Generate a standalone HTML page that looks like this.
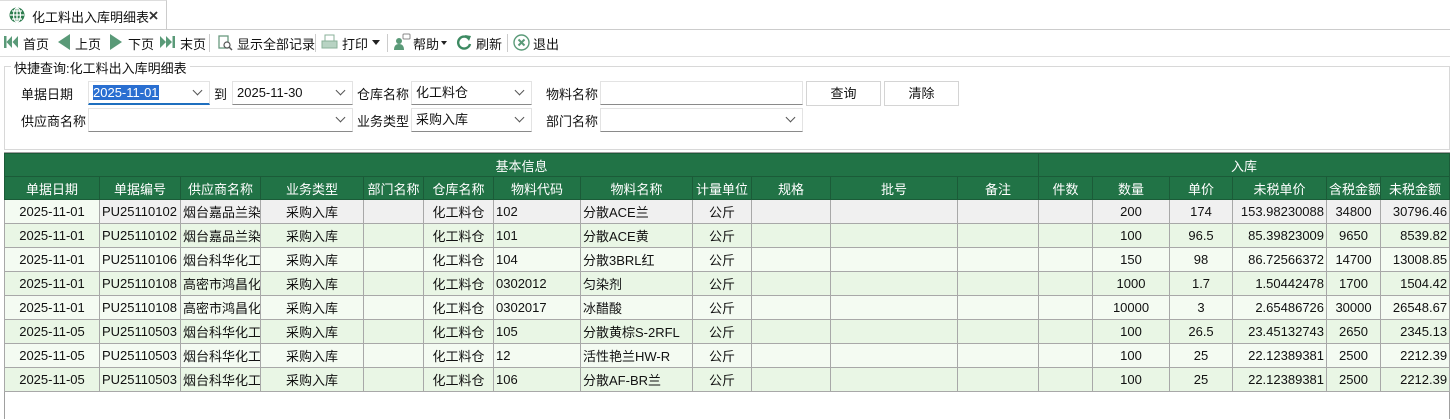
<!DOCTYPE html><html><head><meta charset="utf-8"><style>
*{box-sizing:border-box;margin:0;padding:0}
body{width:1450px;height:419px;overflow:hidden;background:#fff;font-family:"Liberation Sans","Noto Sans CJK SC",sans-serif;font-size:13px;color:#111;position:relative}
.a{position:absolute;white-space:nowrap}
.inp{position:absolute;height:24px;border:1px solid #e3e3e3;border-bottom:1px solid #8a8a8a;background:#fff;line-height:22px;padding-left:4px;font-size:13px}
.inp .v{position:absolute;right:8px;top:5px;width:7px;height:7px;border-right:1px solid #555;border-bottom:1px solid #555;transform:rotate(45deg)}
.btn{position:absolute;height:25px;border:1px solid #d4d4d4;background:#fff;text-align:center;line-height:23px}
table{position:absolute;left:4px;top:153px;width:1445px;border-collapse:collapse;table-layout:fixed;border:1px solid #a0a0a0}
td,th{border:1px solid #a8a8a8;height:24px;padding:0 2px;white-space:nowrap;overflow:hidden;font-weight:normal}
th{background:#217346;color:#fff;border-color:#1b5b38;text-align:center;height:23px}
tr.g td{background:#e9f6e5}
tr.l td{background:#f4fbf2}
tr.s td{background:#f0f0f0}
.c{text-align:center}.r{text-align:right}
.sep{position:absolute;top:34px;width:1px;height:18px;background:#ccc}
</style></head><body>
<div class="a" style="left:0;top:0;width:167px;height:30px;border-right:1px solid #ccc;border-top:1px solid #ddd"></div>
<div class="a" style="left:0;top:29px;width:1450px;height:1px;background:#ccc"></div>
<svg class="a" style="left:9px;top:7px" width="16" height="16" viewBox="0 0 16 16"><circle cx="8" cy="8" r="7.5" fill="#2e7d4f"/><path d="M1 8h14M8 1v14M3 4h10M3 12h10" stroke="#fff" stroke-width="1.3" fill="none"/><ellipse cx="8" cy="8" rx="3.5" ry="7" stroke="#fff" stroke-width="1.2" fill="none"/></svg>
<div class="a" style="left:32px;top:7px;font-size:13px">化工料出入库明细表</div>
<svg class="a" style="left:149px;top:11px" width="9" height="9"><path d="M1 1L8 8M8 1L1 8" stroke="#333" stroke-width="1.8"/></svg>
<!-- toolbar -->
<svg class="a" style="left:4px;top:35px" width="14" height="14"><rect x="0" y="1" width="2.5" height="12" fill="#5a9a78"/><path d="M8 1L2.5 7L8 13ZM14 1L8.5 7L14 13Z" fill="#5a9a78"/></svg>
<div class="a" style="left:23px;top:34px">首页</div>
<svg class="a" style="left:57px;top:34px" width="14" height="16"><path d="M13 0L1 8L13 16Z" fill="#5a9a78"/></svg>
<div class="a" style="left:75px;top:34px">上页</div>
<svg class="a" style="left:109px;top:34px" width="14" height="16"><path d="M1 0L13 8L1 16Z" fill="#5a9a78"/></svg>
<div class="a" style="left:128px;top:34px">下页</div>
<svg class="a" style="left:160px;top:35px" width="16" height="14"><path d="M0 1L6 7L0 13ZM6 1L12 7L6 13Z" fill="#5a9a78"/><rect x="12.5" y="1" width="2.5" height="12" fill="#5a9a78"/></svg>
<div class="a" style="left:180px;top:34px">末页</div>
<div class="sep" style="left:209px"></div>
<svg class="a" style="left:218px;top:34px" width="16" height="17"><rect x="1" y="2" width="9" height="12" fill="none" stroke="#6a9a80" stroke-width="1.3"/><circle cx="9" cy="11" r="3" fill="#fff" stroke="#555" stroke-width="1.2"/><path d="M11 13l3 3" stroke="#555" stroke-width="1.5"/></svg>
<div class="a" style="left:237px;top:34px">显示全部记录</div>
<div class="sep" style="left:315px"></div>
<svg class="a" style="left:321px;top:34px" width="17" height="16"><rect x="4" y="1" width="9" height="6" fill="none" stroke="#8ab09a"/><rect x="1" y="7" width="15" height="7" fill="#b8d3c3" stroke="#8ab09a"/></svg>
<div class="a" style="left:342px;top:34px">打印</div>
<svg class="a" style="left:372px;top:40px" width="8" height="5"><path d="M0 0H8L4 5Z" fill="#222"/></svg>
<div class="sep" style="left:387px"></div>
<svg class="a" style="left:393px;top:33px" width="18" height="18"><circle cx="6" cy="8" r="3" fill="#5a9a78"/><path d="M1 17q0-6 5-6t5 6Z" fill="#5a9a78"/><rect x="10" y="1" width="7" height="5" rx="1" fill="none" stroke="#888"/></svg>
<div class="a" style="left:413px;top:34px">帮助</div>
<svg class="a" style="left:441px;top:41px" width="6" height="4"><path d="M0 0H6L3 4Z" fill="#222"/></svg>
<svg class="a" style="left:456px;top:34px" width="16" height="16"><path d="M13 5A6 6 0 1 0 14 10" fill="none" stroke="#3d8a62" stroke-width="2.4"/><path d="M9 1L15 2L13 7Z" fill="#3d8a62"/></svg>
<div class="a" style="left:476px;top:34px">刷新</div>
<div class="sep" style="left:507px"></div>
<svg class="a" style="left:513px;top:34px" width="17" height="17"><circle cx="8.5" cy="8.5" r="7.5" fill="#fff" stroke="#5a9a78" stroke-width="1.4"/><path d="M5.5 5.5l6 6M11.5 5.5l-6 6" stroke="#5a9a78" stroke-width="2"/></svg>
<div class="a" style="left:533px;top:34px">退出</div>
<div class="a" style="left:0;top:56px;width:1450px;height:1px;background:#ddd"></div>
<!-- groupbox -->
<div class="a" style="left:4px;top:66px;width:1446px;height:84px;border:1px solid #d8d8d8"></div>
<div class="a" style="left:11px;top:58px;background:#fff;padding:0 3px">快捷查询:化工料出入库明细表</div>
<div class="a" style="left:21px;top:84px">单据日期</div>
<div class="inp" style="left:88px;top:81px;width:122px;border-bottom:2px solid #1e6fbf"><span style="background:#2a6fd1;color:#fff">2025-11-01</span><i class="v"></i></div>
<div class="a" style="left:214px;top:84px">到</div>
<div class="inp" style="left:232px;top:81px;width:121px">2025-11-30<i class="v"></i></div>
<div class="a" style="left:357px;top:84px">仓库名称</div>
<div class="inp" style="left:411px;top:81px;width:121px">化工料仓<i class="v"></i></div>
<div class="a" style="left:546px;top:84px">物料名称</div>
<div class="inp" style="left:600px;top:81px;width:203px"></div>
<div class="btn" style="left:806px;top:81px;width:75px">查询</div>
<div class="btn" style="left:884px;top:81px;width:75px">清除</div>
<div class="a" style="left:21px;top:111px">供应商名称</div>
<div class="inp" style="left:88px;top:108px;width:265px"><i class="v"></i></div>
<div class="a" style="left:357px;top:111px">业务类型</div>
<div class="inp" style="left:411px;top:108px;width:121px">采购入库<i class="v"></i></div>
<div class="a" style="left:546px;top:111px">部门名称</div>
<div class="inp" style="left:600px;top:108px;width:203px"><i class="v"></i></div>
<div class="a" style="left:4px;top:152px;width:1446px;height:267px;border:1px solid #a0a0a0;border-bottom:none"></div>
<table>
<colgroup><col style="width:95px"><col style="width:81px"><col style="width:80px"><col style="width:103px"><col style="width:60px"><col style="width:70px"><col style="width:87px"><col style="width:112px"><col style="width:59px"><col style="width:79px"><col style="width:127px"><col style="width:81px"><col style="width:54px"><col style="width:77px"><col style="width:63px"><col style="width:94px"><col style="width:54px"><col style="width:69px"></colgroup>
<tr><th colspan="12">基本信息</th><th colspan="6">入库</th></tr>
<tr><th>单据日期</th><th>单据编号</th><th>供应商名称</th><th>业务类型</th><th>部门名称</th><th>仓库名称</th><th>物料代码</th><th>物料名称</th><th>计量单位</th><th>规格</th><th>批号</th><th>备注</th><th>件数</th><th>数量</th><th>单价</th><th>未税单价</th><th>含税金额</th><th>未税金额</th></tr>
<tr class="s"><td class="c" style="background:#f4fbf2">2025-11-01</td><td>PU25110102</td><td>烟台嘉品兰染</td><td class="c">采购入库</td><td></td><td class="c">化工料仓</td><td>102</td><td>分散ACE兰</td><td class="c">公斤</td><td></td><td></td><td></td><td></td><td class="c">200</td><td class="c">174</td><td class="r">153.98230088</td><td class="c">34800</td><td class="r">30796.46</td></tr>
<tr class="g"><td class="c">2025-11-01</td><td>PU25110102</td><td>烟台嘉品兰染</td><td class="c">采购入库</td><td></td><td class="c">化工料仓</td><td>101</td><td>分散ACE黄</td><td class="c">公斤</td><td></td><td></td><td></td><td></td><td class="c">100</td><td class="c">96.5</td><td class="r">85.39823009</td><td class="c">9650</td><td class="r">8539.82</td></tr>
<tr class="l"><td class="c">2025-11-01</td><td>PU25110106</td><td>烟台科华化工</td><td class="c">采购入库</td><td></td><td class="c">化工料仓</td><td>104</td><td>分散3BRL红</td><td class="c">公斤</td><td></td><td></td><td></td><td></td><td class="c">150</td><td class="c">98</td><td class="r">86.72566372</td><td class="c">14700</td><td class="r">13008.85</td></tr>
<tr class="g"><td class="c">2025-11-01</td><td>PU25110108</td><td>高密市鸿昌化</td><td class="c">采购入库</td><td></td><td class="c">化工料仓</td><td>0302012</td><td>匀染剂</td><td class="c">公斤</td><td></td><td></td><td></td><td></td><td class="c">1000</td><td class="c">1.7</td><td class="r">1.50442478</td><td class="c">1700</td><td class="r">1504.42</td></tr>
<tr class="l"><td class="c">2025-11-01</td><td>PU25110108</td><td>高密市鸿昌化</td><td class="c">采购入库</td><td></td><td class="c">化工料仓</td><td>0302017</td><td>冰醋酸</td><td class="c">公斤</td><td></td><td></td><td></td><td></td><td class="c">10000</td><td class="c">3</td><td class="r">2.65486726</td><td class="c">30000</td><td class="r">26548.67</td></tr>
<tr class="g"><td class="c">2025-11-05</td><td>PU25110503</td><td>烟台科华化工</td><td class="c">采购入库</td><td></td><td class="c">化工料仓</td><td>105</td><td>分散黄棕S-2RFL</td><td class="c">公斤</td><td></td><td></td><td></td><td></td><td class="c">100</td><td class="c">26.5</td><td class="r">23.45132743</td><td class="c">2650</td><td class="r">2345.13</td></tr>
<tr class="l"><td class="c">2025-11-05</td><td>PU25110503</td><td>烟台科华化工</td><td class="c">采购入库</td><td></td><td class="c">化工料仓</td><td>12</td><td>活性艳兰HW-R</td><td class="c">公斤</td><td></td><td></td><td></td><td></td><td class="c">100</td><td class="c">25</td><td class="r">22.12389381</td><td class="c">2500</td><td class="r">2212.39</td></tr>
<tr class="g"><td class="c">2025-11-05</td><td>PU25110503</td><td>烟台科华化工</td><td class="c">采购入库</td><td></td><td class="c">化工料仓</td><td>106</td><td>分散AF-BR兰</td><td class="c">公斤</td><td></td><td></td><td></td><td></td><td class="c">100</td><td class="c">25</td><td class="r">22.12389381</td><td class="c">2500</td><td class="r">2212.39</td></tr>
</table>
</body></html>
